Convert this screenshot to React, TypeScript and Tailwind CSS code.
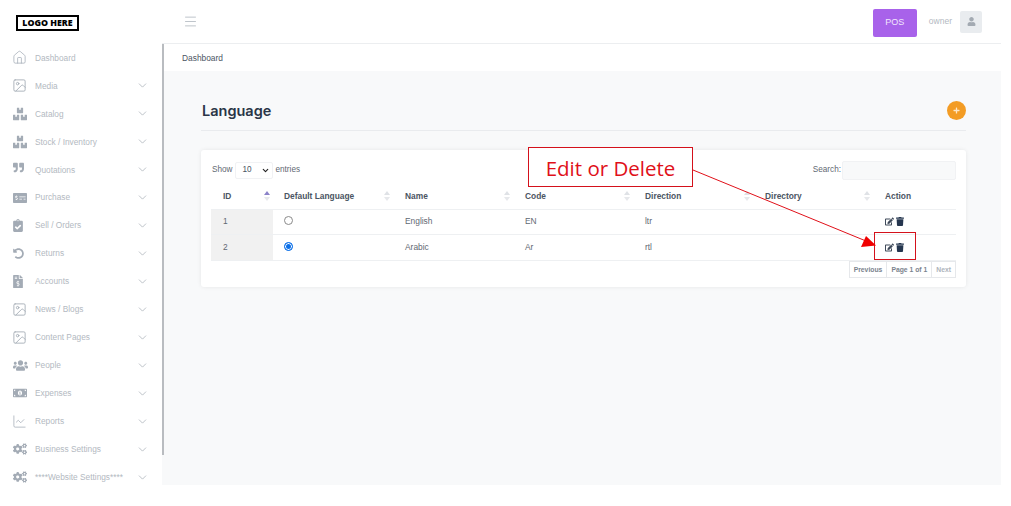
import React from "react";
import { ChevronDown, Home, Image, Menu, LineChart } from "lucide-react";
import { FaBoxes, FaQuoteRight, FaMoneyCheckAlt, FaClipboardCheck, FaUndoAlt, FaFileInvoiceDollar, FaUsers, FaMoneyBillAlt, FaCogs, FaEdit, FaTrash, FaPlus, FaUser } from "react-icons/fa";

const c = "text-[#a3abb5]";
const line = `w-[15px] h-[15px] -ml-[1px] ${c}`;
const solid = `w-[14px] h-[14px] ${c}`;
const items: [string, React.ReactNode][] = [
  ["Dashboard", <Home className={line} strokeWidth={1.2} />],
  ["Media", <Image className={line} strokeWidth={1.4} />],
  ["Catalog", <FaBoxes className={solid} />],
  ["Stock / Inventory", <FaBoxes className={solid} />],
  ["Quotations", <FaQuoteRight className={`w-[11px] h-[11px] -translate-y-[2px] ${c}`} />],
  ["Purchase", <FaMoneyCheckAlt className={solid} />],
  ["Sell / Orders", <FaClipboardCheck className={`w-[10px] h-[13px] ${c}`} />],
  ["Returns", <FaUndoAlt className={`w-[11px] h-[11px] ${c}`} />],
  ["Accounts", <FaFileInvoiceDollar className={`w-[10px] h-[13px] ${c}`} />],
  ["News / Blogs", <Image className={line} strokeWidth={1.4} />],
  ["Content Pages", <Image className={line} strokeWidth={1.4} />],
  ["People", <FaUsers className={`w-[15px] h-[15px] ${c}`} />],
  ["Expenses", <FaMoneyBillAlt className={solid} />],
  ["Reports", <LineChart className={line} strokeWidth={1.2} />],
  ["Business Settings", <FaCogs className={solid} />],
  ["****Website Settings****", <FaCogs className={solid} />],
];

function SortIcon({ active }: { active?: boolean }) {
  return (
    <svg width="6" height="10" viewBox="0 0 6 10" className="shrink-0 mr-[1px]">
      <polygon points="3,0 6,4 0,4" fill={active ? "#8b83c9" : "#dfe2e6"} />
      <polygon points="3,10 6,6 0,6" fill="#e6e8eb" />
    </svg>
  );
}

function Th({ label, w, pl = "pl-[12px]", sort = "none" }: { label: string; w: string; pl?: string; sort?: "none" | "up" | "off" }) {
  return (
    <th className={`${w} h-[25px] ${pl} pr-[2px] text-left text-[8.4px] font-bold text-[#4b5563] border-b border-[#eef0f2]`}>
      <div className="flex items-center justify-between">
        <span>{label}</span>
        {sort === "none" && <SortIcon />}
        {sort === "up" && <SortIcon active />}
      </div>
    </th>
  );
}

function Row({ id, name, code, dir, h, checked }: { id: string; name: string; code: string; dir: string; h: string; checked?: boolean }) {
  return (
    <tr className={`${h} border-b border-[#eef0f2] text-[8.4px] text-[#5f6873]`}>
      <td className="pl-[12px] bg-[#f1f1f1]">{id}</td>
      <td className="pl-[11px]">
        {checked ? (
          <div className="w-[9px] h-[9px] -translate-y-[1px] rounded-full border border-[#0b6fe8] bg-[#0b6fe8] shadow-[inset_0_0_0_1px_#ffffff]" />
        ) : (
          <div className="w-[9px] h-[9px] -translate-y-[1px] rounded-full border border-[#8a8a8a] bg-white" />
        )}
      </td>
      <td className="pl-[12px]">{name}</td>
      <td className="pl-[12px]">{code}</td>
      <td className="pl-[12px]">{dir}</td>
      <td />
      <td className="pl-[12px]">
        <div className="flex items-center gap-[2px]">
          <FaEdit className="w-[9px] h-[9px] text-[#3f4a5a]" />
          <FaTrash className="w-[8px] h-[9px] text-[#25364f]" />
        </div>
      </td>
    </tr>
  );
}

export default function App() {
  return (
    <div className="relative w-[1011px] h-[506px] overflow-hidden bg-white font-['Liberation_Sans',Arial,sans-serif]">
      <div className="flex w-[1001px] h-[485px]">
        <aside className="w-[162px] shrink-0 flex flex-col">
          <div className="h-[44px] shrink-0 pl-[16px] pt-[15px]">
            <div className="w-[63px] h-[16px] border-2 border-black flex items-center justify-center text-[8.8px] font-black text-black leading-none whitespace-nowrap font-['Open_Sans',sans-serif]">
              LOGO HERE
            </div>
          </div>
          <nav className="flex flex-col shrink-0">
            {items.map(([label, icon]) => (
              <div key={label} className="flex items-center pl-[13px] pr-[13px] h-[27.95px] shrink-0">
                <span className="w-[22px] flex justify-start shrink-0">{icon}</span>
                <span className="flex-1 text-[8.3px] text-[#b3b9c1] whitespace-nowrap">{label}</span>
                {label !== "Dashboard" && <ChevronDown className="w-[13px] h-[13px] text-[#a9b0b8]" strokeWidth={1.4} />}
              </div>
            ))}
          </nav>
        </aside>
        <div className="flex-1 flex flex-col min-w-0 relative">
          <header className="h-[44px] shrink-0 flex items-center border-b border-[#eceef0] pl-[21px] pr-[19px]">
            <Menu className="w-[15px] h-[15px] text-[#aab1b9]" strokeWidth={1.2} />
            <div className="ml-auto w-[44px] h-[28px] mt-[2px] rounded-[2px] bg-[#a862ea] text-[#f1e6fc] text-[9px] flex items-center justify-center">POS</div>
            <span className="ml-[12px] text-[8.5px] text-[#b3b9c1]">owner</span>
            <div className="ml-[8px] w-[22px] h-[22px] rounded-[2px] bg-[#e9ecef] flex items-center justify-center">
              <FaUser className="w-[9px] h-[9px] text-[#a3aab2]" />
            </div>
          </header>
          <div className="h-[27px] shrink-0 flex items-center pl-[20px] pt-[1px] text-[8.4px] text-[#4b5563]">Dashboard</div>
          <main className="flex-1 bg-[#f8f9fa] pl-[39px] pr-[35px] pt-[29px]">
            <div className="flex items-center justify-between h-[20px]">
              <h1 className="ml-[1px] mt-[1px] text-[14.5px] font-semibold text-[#2a3547] font-['Inter',sans-serif]">Language</h1>
              <div className="w-[19px] h-[19px] rounded-full bg-[#f39c24] flex items-center justify-center">
                <FaPlus className="w-[7px] h-[7px] text-[#fde7c8]" />
              </div>
            </div>
            <div className="mt-[10px] border-t border-[#e9ebee]" />
            <div className="mt-[19px] h-[137px] bg-white rounded-[3px] shadow-[0_0_4px_rgba(0,0,0,0.08)] px-[10px] pt-[10px]">
              <div className="flex items-center justify-between h-[20px] text-[8.2px] text-[#5f6873]">
                <div className="flex items-center gap-[2px]">
                  <span className="ml-[1px]">Show</span>
                  <div className="w-[38px] h-[17px] ml-[1px] rounded-[2px] border border-[#f1f2f4] flex items-center justify-between pl-[6px] pr-[2px] text-[#4b5563]">
                    <span>10</span>
                    <ChevronDown className="w-[9px] h-[9px] text-[#222]" strokeWidth={3} />
                  </div>
                  <span>entries</span>
                </div>
                <div className="flex items-center gap-[1px]">
                  <span>Search:</span>
                  <div className="w-[114px] h-[19px] rounded-[2px] bg-[#f8f9fa] border border-[#f1f2f4]" />
                </div>
              </div>
              <table className="w-[745px] mt-[4px] border-collapse table-fixed">
                <thead>
                  <tr>
                    <Th label="ID" w="w-[62px]" sort="up" />
                    <Th label="Default Language" w="w-[120px]" pl="pl-[11px]" />
                    <Th label="Name" w="w-[120px]" />
                    <Th label="Code" w="w-[120px]" />
                    <Th label="Direction" w="w-[120px]" />
                    <Th label="Directory" w="w-[120px]" />
                    <Th label="Action" w="w-[83px]" sort="off" />
                  </tr>
                </thead>
                <tbody>
                  <Row id="1" name="English" code="EN" dir="ltr" h="h-[25px]" />
                  <Row id="2" name="Arabic" code="Ar" dir="rtl" h="h-[26px]" checked />
                </tbody>
              </table>
              <div className="flex justify-end">
                <div className="flex h-[17px] border border-[#e6e8eb] text-[6.8px] font-bold items-center">
                  <span className="px-[4px] text-[#7b838e] leading-[15px] border-r border-[#e6e8eb]">Previous</span>
                  <span className="px-[4px] text-[#7b838e] leading-[15px] border-r border-[#e6e8eb]">Page 1 of 1</span>
                  <span className="px-[4px] text-[#adb3bb] leading-[15px]">Next</span>
                </div>
              </div>
            </div>
          </main>
          <div className="absolute left-0 top-[44px] w-[2px] h-[411px] bg-[#b9bcc0]" />
        </div>
      </div>

      {/* annotation */}
      <div className="absolute left-[528px] top-[147px] w-[165px] h-[40px] pt-[3px] bg-white border border-[#d4111b] flex items-center justify-center text-[20.5px] text-[#e01019] font-['Open_Sans',sans-serif] leading-none">
        Edit or Delete
      </div>
      <div className="absolute left-[874px] top-[232px] w-[42px] h-[28px] border border-[#d4111b]" />
      <svg className="absolute left-0 top-0 pointer-events-none" width="1011" height="506" viewBox="0 0 1011 506">
        <line x1="693" y1="170" x2="866" y2="241" stroke="#e01019" strokeWidth="1" />
        <polygon points="876,245.5 861,247 866,236" fill="#f00000" />
      </svg>
    </div>
  );
}
